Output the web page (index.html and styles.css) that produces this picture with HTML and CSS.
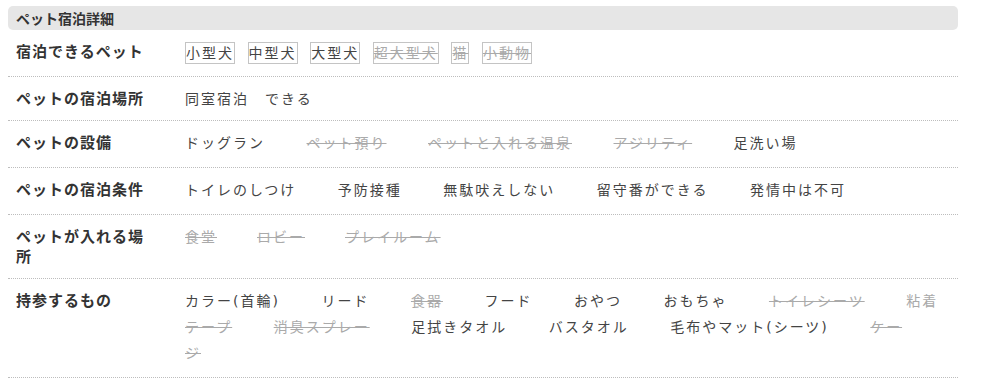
FILE: index.html
```html
<!DOCTYPE html>
<html lang="ja">
<head>
<meta charset="utf-8">
<title>ペット宿泊詳細</title>
<link rel="stylesheet" href="styles.css">
</head>
<body>
<section class="detail">
  <h2 class="detail-title">ペット宿泊詳細</h2>
  <dl class="detail-list">
    <div class="detail-row detail-row--tags">
      <dt class="detail-label">宿泊できるペット</dt>
      <dd class="detail-value"><span class="tag">小型犬</span><span class="tag">中型犬</span><span class="tag">大型犬</span><span class="tag tag--off">超大型犬</span><span class="tag tag--off">猫</span><span class="tag tag--off">小動物</span></dd>
    </div>
    <div class="detail-row detail-row--plain">
      <dt class="detail-label">ペットの宿泊場所</dt>
      <dd class="detail-value"><span class="item item--tight">同室宿泊</span><span class="item">できる</span></dd>
    </div>
    <div class="detail-row">
      <dt class="detail-label">ペットの設備</dt>
      <dd class="detail-value"><span class="item">ドッグラン</span><span class="item item--off">ペット預り</span><span class="item item--off">ペットと入れる温泉</span><span class="item item--off">アジリティ</span><span class="item">足洗い場</span></dd>
    </div>
    <div class="detail-row">
      <dt class="detail-label">ペットの宿泊条件</dt>
      <dd class="detail-value"><span class="item">トイレのしつけ</span><span class="item">予防接種</span><span class="item">無駄吠えしない</span><span class="item">留守番ができる</span><span class="item">発情中は不可</span></dd>
    </div>
    <div class="detail-row">
      <dt class="detail-label">ペットが入れる場所</dt>
      <dd class="detail-value"><span class="item item--off item--short">食堂</span><span class="item item--off item--short">ロビー</span><span class="item item--off">プレイルーム</span></dd>
    </div>
    <div class="detail-row">
      <dt class="detail-label">持参するもの</dt>
      <dd class="detail-value"><span class="item">カラー(首輪)</span><span class="item">リード</span><span class="item item--off">食器</span><span class="item">フード</span><span class="item">おやつ</span><span class="item">おもちゃ</span><span class="item item--off">トイレシーツ</span><span class="item item--muted item--joined">粘着</span><span class="item item--off">テープ</span><span class="item item--off">消臭スプレー</span><span class="item">足拭きタオル</span><span class="item">バスタオル</span><span class="item">毛布やマット(シーツ)</span><span class="item item--off item--joined">ケー</span><span class="item item--off">ジ</span></dd>
    </div>
  </dl>
</section>
</body>
</html>
```
FILE: styles.css
```css
html, body {
  background: #ffffff;
}

body {
  margin: 6px 8px 0;
  font-family: "DejaVu Sans", "Noto Sans CJK JP", sans-serif;
  color: #444444;
}

.detail {
  width: 950px;
}

.detail-title {
  margin: 0;
  height: 24px;
  padding: 0 8px;
  background: #e6e6e6;
  border-radius: 5px;
  font-family: "Noto Sans CJK JP", sans-serif;
  font-size: 14px;
  font-weight: 700;
  line-height: 24px;
  color: #333333;
}

.detail-list {
  margin: 0;
}

.detail-row {
  display: grid;
  grid-template-columns: 177px 1fr;
  border-bottom: 1px dotted #bdbdbd;
}

.detail-label {
  padding: 11px 29px 12px 8px;
  font-family: "Noto Sans CJK JP", sans-serif;
  font-size: 15px;
  font-weight: 700;
  line-height: 20px;
  letter-spacing: 1px;
  color: #333333;
}

.detail-value {
  margin: 0;
  padding: 9px 12px 11px 0;
  font-size: 14px;
  line-height: 26px;
  letter-spacing: 2px;
}

.detail-row--plain .detail-value {
  padding-bottom: 8px;
}

.detail-row--tags .detail-value {
  display: flex;
  align-items: flex-start;
  gap: 12.6px;
  padding-top: 12px;
  padding-bottom: 12px;
}

.tag {
  display: block;
  border: 1px solid #c4c4c4;
  line-height: 20px;
  color: #444444;
}

.tag--off {
  color: #aaaaaa;
  text-decoration: line-through;
}

.item {
  margin-right: 41.5px;
}

.item--tight {
  margin-right: 16px;
}

.item--short {
  margin-right: 40px;
}

.item--joined {
  margin-right: 0;
}

.item--off {
  color: #aaaaaa;
  text-decoration: line-through;
}

.item--muted {
  color: #aaaaaa;
}
```
